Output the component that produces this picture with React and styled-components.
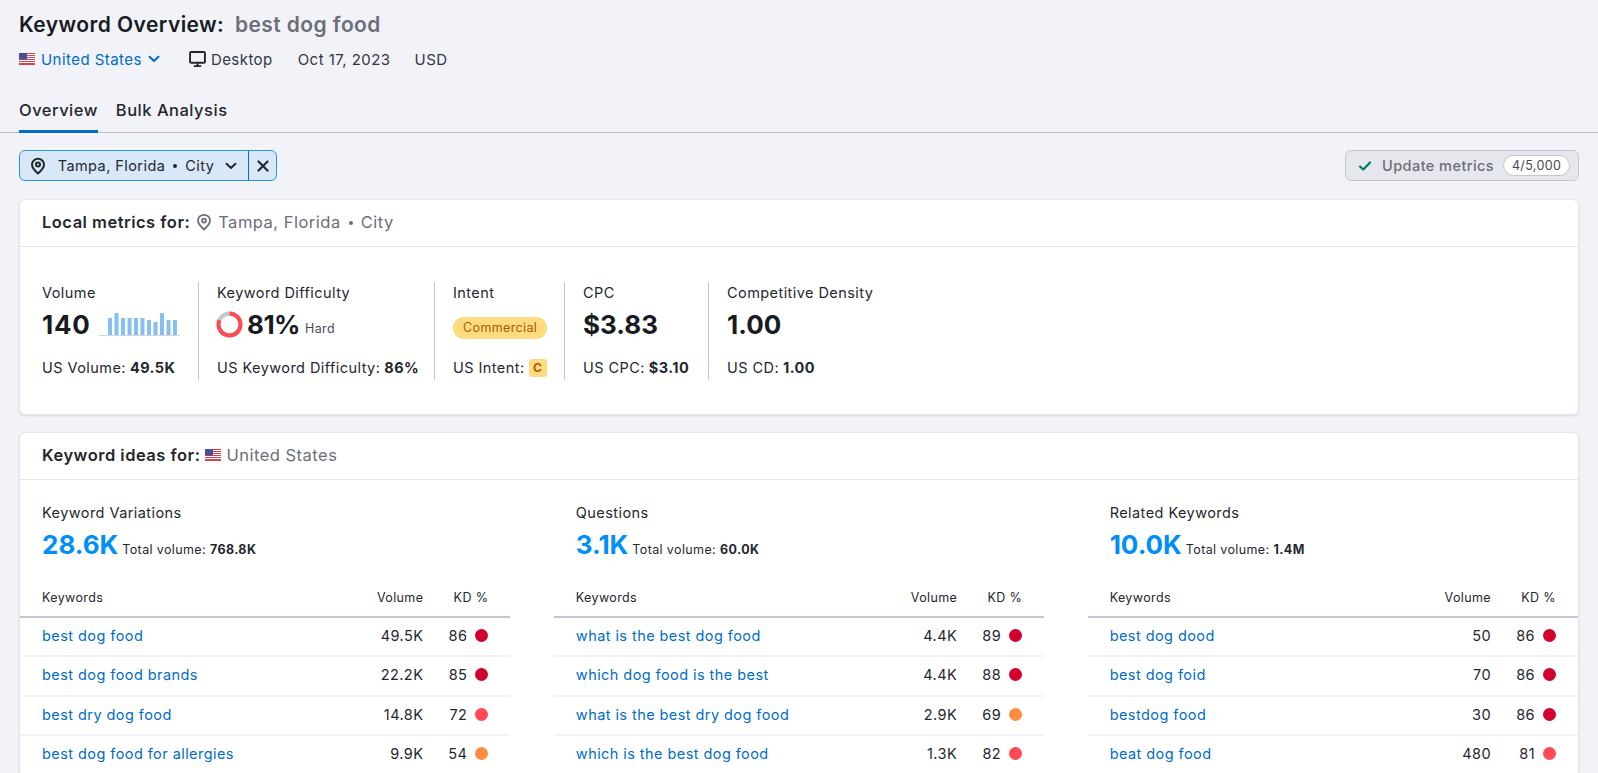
import React from 'react';
import styled, { createGlobalStyle } from 'styled-components';

const GlobalStyle = createGlobalStyle`
    html, body { margin: 0; padding: 0; height: 773px; overflow: hidden; background: #f1f3f9; }
    body { font-family: Inter, 'Noto Sans', sans-serif; color: #191b23; font-size: 14.5px; }
    * { letter-spacing: 0.03em; }
`;

const Page = styled.div`
    height: 773px;
    overflow: hidden;
`;

const Header = styled.header`
    display: flex;
    flex-direction: column;
    padding: 11px 19px 0;
    border-bottom: 1px solid #b9bdca;
    height: 121px;
`;

const Title = styled.h1`
    margin: 0;
    font-size: 21px;
    line-height: 27px;
    font-weight: 600;
    letter-spacing: 0.02em;
    span {
        color: #6c6e79;
        margin-left: 5px;
        letter-spacing: inherit;
    }
`;

const MetaRow = styled.div`
    display: flex;
    align-items: center;
    margin-top: 9px;
    height: 24px;
    font-size: 15px;
    color: #34363f;
`;

const MetaItem = styled.span`
    display: flex;
    align-items: center;
    gap: ${p => p.$gap || 4}px;
    margin-right: ${p => p.$mr || 0}px;
    color: ${p => p.$blue ? '#006dca' : 'inherit'};
`;

const Tabs = styled.nav`
    display: flex;
    gap: 18px;
    margin-top: auto;
`;

const Tab = styled.div`
    font-size: 16.5px;
    font-weight: 500;
    line-height: 22px;
    height: 33px;
    box-sizing: border-box;
    color: #25272f;
    position: relative;
    &::after {
        content: '';
        display: ${p => p.$active ? 'block' : 'none'};
        position: absolute;
        left: 0;
        right: 0;
        bottom: -1px;
        height: 3px;
        background: #006dca;
    }
`;

const Content = styled.main`
    padding: 17px 19px 0;
`;

const Toolbar = styled.div`
    display: flex;
    justify-content: space-between;
    margin-bottom: 18px;
`;

const Chip = styled.div`
    display: flex;
    height: 31px;
    box-sizing: border-box;
    border: 1px solid #2b94e1;
    border-radius: 6px;
    background: #d8e8f8;
    color: #25272f;
    font-size: 14.5px;
`;

const ChipMain = styled.div`
    display: flex;
    align-items: center;
    justify-content: space-between;
    width: 229px;
    padding: 0 11px 0 9px;
    box-sizing: border-box;
    border-right: 1px solid #006dca;
`;

const ChipClose = styled.div`
    width: 27px;
    display: flex;
    align-items: center;
    justify-content: center;
`;

const Dot = styled.span`
    display: inline-block;
    width: 4px;
    height: 4px;
    border-radius: 50%;
    background: currentColor;
    margin: 0 8px 2px;
    vertical-align: middle;
`;

const UpdateButton = styled.div`
    display: flex;
    align-items: center;
    width: 234px;
    height: 31px;
    box-sizing: border-box;
    border: 1px solid #c4c7cf;
    border-radius: 6px;
    background: #e6e7ed;
    color: #6c6e79;
    font-size: 14.5px;
    font-weight: 500;
    padding-left: 12px;
`;

const UpdateLabel = styled.span`
    margin-left: 10px;
    white-space: nowrap;
`;

const Counter = styled.span`
    margin-left: 9px;
    width: 67px;
    height: 21px;
    box-sizing: border-box;
    border: 1px solid #c4c7cf;
    border-radius: 11px;
    background: #fff;
    color: #484a54;
    font-size: 12.5px;
    font-weight: 400;
    display: flex;
    align-items: center;
    justify-content: center;
`;

const Card = styled.section`
    background: #fff;
    border: 1px solid #e6e7ed;
    border-radius: 6px;
    box-shadow: 0 1px 2px rgba(25, 27, 35, 0.12);
    margin-bottom: 17px;
`;

const CardHeader = styled.div`
    display: flex;
    align-items: center;
    height: 47px;
    box-sizing: border-box;
    padding: 0 0 2px 22px;
    border-bottom: 1px solid #e6e7ed;
    font-size: 16.5px;
    color: #6c6e79;
    b {
        color: #25272f;
        font-weight: 600;
        margin-right: 5px;
    }
`;

const HeaderPlace = styled.span`
    margin-left: 5px;
`;

const Metrics = styled.div`
    display: flex;
    padding: 35px 0 34px 22px;
`;

const Metric = styled.div`
    display: flex;
    flex-direction: column;
    box-sizing: border-box;
    width: ${p => p.$w}px;
    height: 98px;
    padding-left: ${p => p.$first ? 0 : 18}px;
    border-left: ${p => p.$first ? 'none' : '1px solid #c4c7cf'};
`;

const MetricLabel = styled.div`
    margin-top: 1px;
    line-height: 20px;
    color: #25272f;
`;

const MetricValue = styled.div`
    display: flex;
    align-items: center;
    height: 34px;
    margin-top: 4px;
    font-size: 26px;
    font-weight: 700;
    letter-spacing: 0;
    color: #191b23;
`;

const BigNumber = styled.span`
    letter-spacing: ${p => p.$ls || 0}em;
`;

const MetricNote = styled.span`
    font-size: 12.5px;
    font-weight: 400;
    color: #484a54;
    margin: 8px 0 0 5px;
`;

const MetricSub = styled.div`
    display: flex;
    align-items: center;
    margin-top: auto;
    margin-bottom: 2px;
    line-height: 20px;
    color: #25272f;
    b {
        font-weight: 700;
        margin-left: 4px;
    }
`;

const IntentPill = styled.span`
    display: inline-block;
    margin-top: 7px;
    padding: 0 10px;
    height: 22px;
    line-height: 22px;
    border-radius: 11px;
    background: #ffdb80;
    color: #a85d00;
    font-size: 12.5px;
    font-weight: 400;
`;

const IntentBadge = styled.span`
    display: inline-block;
    width: 18px;
    height: 18px;
    line-height: 18px;
    margin-left: 4px;
    text-align: center;
    border-radius: 3px;
    background: #ffdb80;
    color: #a85d00;
    font-size: 12px;
    font-weight: 700;
`;

const Ideas = styled.div`
    display: grid;
    grid-template-columns: repeat(3, 1fr);
    column-gap: 43.5px;
    padding-top: 23px;
`;

const IdeaTitle = styled.div`
    padding-left: 22px;
    line-height: 20px;
    color: #25272f;
`;

const IdeaTotal = styled.div`
    display: flex;
    align-items: baseline;
    padding-left: 22px;
    margin-top: 6px;
    height: 36px;
    font-size: 12.5px;
    color: #25272f;
    strong {
        font-size: 26px;
        font-weight: 700;
        letter-spacing: 0;
        color: #008ff8;
        margin-right: 4px;
    }
    b {
        font-weight: 700;
        margin-left: 4px;
    }
`;

const Grid = styled.div`
    display: grid;
    grid-template-columns: 1fr 73px 65px;
    align-items: center;
    height: ${p => p.$head ? 47 : 39.3}px;
    box-sizing: border-box;
    padding: ${p => p.$head ? '8px 22px 0 22px' : '0 22px 2px 22px'};
    border-bottom: ${p => p.$head ? '2px solid #c4c7cf' : '2px solid #f1f3f9'};
    font-size: ${p => p.$head ? 12.5 : 14.5}px;
    color: #25272f;
    margin-top: ${p => p.$head ? 6 : 0}px;
`;

const Link = styled.a`
    color: #006dca;
    text-decoration: none;
`;

const Right = styled.span`
    text-align: right;
`;

const Kd = styled.span`
    display: flex;
    align-items: center;
    justify-content: flex-end;
    gap: 8px;
`;

const KdDot = styled.i`
    display: block;
    width: 13px;
    height: 13px;
    border-radius: 50%;
    background: ${p => p.color};
`;

const Flag = () => (
    <svg width="16" height="12" viewBox="0 0 16 12">
        <rect width="16" height="12" fill="#fff" />
        {[0, 2, 4, 6, 8, 10].map(y => <rect key={y} y={y} width="16" height="1" fill="#d8434e" />)}
        <rect y="11" width="16" height="1" fill="#d8434e" />
        <rect width="8" height="6.5" fill="#4a4f9c" />
    </svg>
);

const Pin = ({ size = 18, color = '#25272f', weight = 2 }) => (
    <svg width={size} height={size} viewBox="0 0 18 18" fill="none" stroke={color} strokeWidth={weight}>
        <path d="M9 16.5C6 14 3 11.2 3 7.6 3 4.3 5.7 1.8 9 1.8s6 2.5 6 5.8c0 3.6-3 6.4-6 8.9z" strokeLinejoin="round" />
        <circle cx="9" cy="7.6" r="2" />
    </svg>
);

const Chevron = ({ color = '#25272f' }) => (
    <svg width="12" height="8" viewBox="0 0 12 8" fill="none" stroke={color} strokeWidth="2" strokeLinecap="round" strokeLinejoin="round">
        <path d="M1.5 1.8 6 6l4.500-4.200" />
    </svg>
);

const Monitor = () => (
    <svg width="17" height="17" viewBox="0 0 16 16" fill="none" stroke="#25272f">
        <rect x="1" y="1" width="14" height="10" rx="1" strokeWidth="1.8" />
        <path d="M8 11v3M4.500 14.200h7" strokeWidth="1.8" />
    </svg>
);

const Cross = () => (
    <svg width="12" height="12" viewBox="0 0 12 12" fill="none" stroke="#25272f" strokeWidth="2.2" strokeLinecap="round">
        <path d="M1.500 1.500l9 9M10.500 1.500l-9 9" />
    </svg>
);

const Check = () => (
    <svg width="14" height="12" viewBox="0 0 14 12" fill="none" stroke="#007c65" strokeWidth="2.2" strokeLinecap="round" strokeLinejoin="round">
        <path d="M2 6.500l3.300 3L12 2.500" />
    </svg>
);

const bars = [17, 22, 17, 17, 17, 17, 15, 13, 22, 15, 15];

const SparkBox = styled.svg`
    margin-left: 8px;
`;

const Spark = () => (
    <SparkBox width="81" height="26" viewBox="0 0 81 26">
        {bars.map((h, i) => (
            <rect key={i} x={9 + i * 6.5} y={24 - h} width="4" height={h} fill="#85c0ee" rx="0.5" />
        ))}
        <rect y="24" width="81" height="1" fill="#d1d4db" />
    </SparkBox>
);

const DonutBox = styled.svg`
    margin: 0 4px 0 -1px;
`;

const Donut = () => {
    const r = 11;
    const c = 2 * Math.PI * r;
    return (
        <DonutBox width="27" height="27" viewBox="0 0 27 27">
            <circle cx="13.500" cy="13.500" r={r} fill="none" stroke="#c4c7cf" strokeWidth="4" />
            <circle
                cx="13.500"
                cy="13.500"
                r={r}
                fill="none"
                stroke="#ff4953"
                strokeWidth="4"
                strokeDasharray={`${c * 0.81} ${c}`}
                transform="rotate(-90 13.500 13.500)"
            />
        </DonutBox>
    );
};

const RED = '#d1002f';
const CORAL = '#ff4953';
const ORANGE = '#ff8c43';

const columns = [
    {
        title: 'Keyword Variations',
        count: '28.6K',
        total: '768.8K',
        rows: [
            ['best dog food', '49.5K', 86, RED],
            ['best dog food brands', '22.2K', 85, RED],
            ['best dry dog food', '14.8K', 72, CORAL],
            ['best dog food for allergies', '9.9K', 54, ORANGE],
        ],
    },
    {
        title: 'Questions',
        count: '3.1K',
        total: '60.0K',
        rows: [
            ['what is the best dog food', '4.4K', 89, RED],
            ['which dog food is the best', '4.4K', 88, RED],
            ['what is the best dry dog food', '2.9K', 69, ORANGE],
            ['which is the best dog food', '1.3K', 82, CORAL],
        ],
    },
    {
        title: 'Related Keywords',
        count: '10.0K',
        total: '1.4M',
        rows: [
            ['best dog dood', '50', 86, RED],
            ['best dog foid', '70', 86, RED],
            ['bestdog food', '30', 86, RED],
            ['beat dog food', '480', 81, CORAL],
        ],
    },
];

const App = () => {
    return (
        <Page>
            <GlobalStyle />
            <Header>
                <Title>Keyword Overview: <span>best dog food</span></Title>
                <MetaRow>
                    <MetaItem $blue $gap={6} $mr={29}><Flag /> United States <Chevron color="#006dca" /></MetaItem>
                    <MetaItem $gap={5} $mr={25}><Monitor /> Desktop</MetaItem>
                    <MetaItem $mr={24}>Oct 17, 2023</MetaItem>
                    <MetaItem>USD</MetaItem>
                </MetaRow>
                <Tabs>
                    <Tab $active>Overview</Tab>
                    <Tab>Bulk Analysis</Tab>
                </Tabs>
            </Header>
            <Content>
                <Toolbar>
                    <Chip>
                        <ChipMain>
                            <Pin />
                            <span>Tampa, Florida<Dot />City</span>
                            <Chevron />
                        </ChipMain>
                        <ChipClose><Cross /></ChipClose>
                    </Chip>
                    <UpdateButton>
                        <Check />
                        <UpdateLabel>Update metrics</UpdateLabel>
                        <Counter>4/5,000</Counter>
                    </UpdateButton>
                </Toolbar>

                <Card>
                    <CardHeader>
                        <b>Local metrics for:</b>
                        <Pin size={18} color="#6c6e79" weight={1.8} />
                        <HeaderPlace>Tampa, Florida<Dot />City</HeaderPlace>
                    </CardHeader>
                    <Metrics>
                        <Metric $first $w={156}>
                            <MetricLabel>Volume</MetricLabel>
                            <MetricValue><BigNumber $ls={0.03}>140</BigNumber><Spark /></MetricValue>
                            <MetricSub>US Volume: <b>49.5K</b></MetricSub>
                        </Metric>
                        <Metric $w={236}>
                            <MetricLabel>Keyword Difficulty</MetricLabel>
                            <MetricValue><Donut /><BigNumber $ls={-0.02}>81%</BigNumber><MetricNote>Hard</MetricNote></MetricValue>
                            <MetricSub>US Keyword Difficulty: <b>86%</b></MetricSub>
                        </Metric>
                        <Metric $w={130}>
                            <MetricLabel>Intent</MetricLabel>
                            <MetricValue><IntentPill>Commercial</IntentPill></MetricValue>
                            <MetricSub>US Intent: <IntentBadge>C</IntentBadge></MetricSub>
                        </Metric>
                        <Metric $w={144}>
                            <MetricLabel>CPC</MetricLabel>
                            <MetricValue>$3.83</MetricValue>
                            <MetricSub>US CPC: <b>$3.10</b></MetricSub>
                        </Metric>
                        <Metric $w={240}>
                            <MetricLabel>Competitive Density</MetricLabel>
                            <MetricValue>1.00</MetricValue>
                            <MetricSub>US CD: <b>1.00</b></MetricSub>
                        </Metric>
                    </Metrics>
                </Card>

                <Card>
                    <CardHeader>
                        <b>Keyword ideas for:</b>
                        <Flag />
                        <HeaderPlace>United States</HeaderPlace>
                    </CardHeader>
                    <Ideas>
                        {columns.map(col => (
                            <div key={col.title}>
                                <IdeaTitle>{col.title}</IdeaTitle>
                                <IdeaTotal>
                                    <strong>{col.count}</strong>
                                    Total volume: <b>{col.total}</b>
                                </IdeaTotal>
                                <Grid $head>
                                    <span>Keywords</span>
                                    <Right>Volume</Right>
                                    <Right>KD %</Right>
                                </Grid>
                                {col.rows.map(([kw, vol, kd, color]) => (
                                    <Grid key={kw}>
                                        <Link href="#">{kw}</Link>
                                        <Right>{vol}</Right>
                                        <Kd>{kd}<KdDot color={color} /></Kd>
                                    </Grid>
                                ))}
                            </div>
                        ))}
                    </Ideas>
                </Card>
            </Content>
        </Page>
    );
};

export default App;
